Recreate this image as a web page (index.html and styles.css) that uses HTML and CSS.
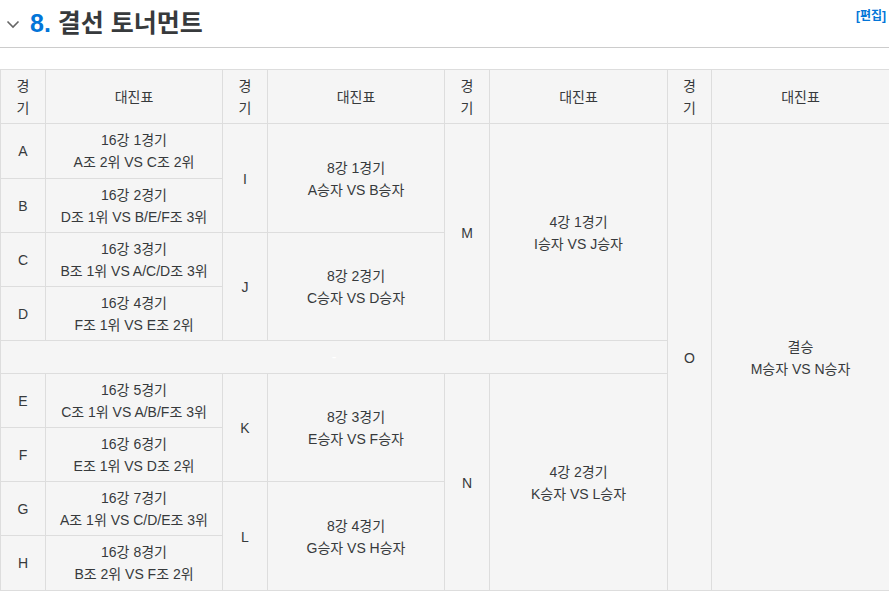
FILE: index.html
```html
<!DOCTYPE html>
<html lang="ko">
<head>
<meta charset="utf-8">
<link rel="stylesheet" href="styles.css">
</head>
<body>
<div class="heading">
  <svg class="chev" width="14" height="9" viewBox="0 0 14 9"><path d="M1.5 1.5 L7 7 L12.5 1.5" fill="none" stroke="#666" stroke-width="1.6"/></svg>
  <h2 class="title"><span class="num">8.</span> 결선 토너먼트</h2>
  <a class="edit">[편집]</a>
</div>
<table class="bracket">
  <colgroup>
    <col class="c-g"><col class="c-m"><col class="c-g"><col class="c-m"><col class="c-g"><col class="c-m3"><col class="c-g2"><col class="c-m3">
  </colgroup>
  <tr class="head">
    <td>경기</td><td>대진표</td><td>경기</td><td>대진표</td><td>경기</td><td>대진표</td><td>경기</td><td>대진표</td>
  </tr>
  <tr>
    <td class="tall">A</td><td class="tall">16강 1경기<br>A조 2위 VS C조 2위</td>
    <td rowspan="2">I</td><td rowspan="2">8강 1경기<br>A승자 VS B승자</td>
    <td rowspan="4">M</td><td rowspan="4">4강 1경기<br>I승자 VS J승자</td>
    <td rowspan="9">O</td><td rowspan="9">결승<br>M승자 VS N승자</td>
  </tr>
  <tr><td>B</td><td>16강 2경기<br>D조 1위 VS B/E/F조 3위</td></tr>
  <tr>
    <td>C</td><td>16강 3경기<br>B조 1위 VS A/C/D조 3위</td>
    <td rowspan="2">J</td><td rowspan="2">8강 2경기<br>C승자 VS D승자</td>
  </tr>
  <tr><td>D</td><td>16강 4경기<br>F조 1위 VS E조 2위</td></tr>
  <tr><td colspan="6" class="spacer"><span class="hidden">-</span></td></tr>
  <tr>
    <td>E</td><td>16강 5경기<br>C조 1위 VS A/B/F조 3위</td>
    <td rowspan="2">K</td><td rowspan="2">8강 3경기<br>E승자 VS F승자</td>
    <td rowspan="4">N</td><td rowspan="4">4강 2경기<br>K승자 VS L승자</td>
  </tr>
  <tr><td>F</td><td>16강 6경기<br>E조 1위 VS D조 2위</td></tr>
  <tr>
    <td>G</td><td>16강 7경기<br>A조 1위 VS C/D/E조 3위</td>
    <td rowspan="2">L</td><td rowspan="2">8강 4경기<br>G승자 VS H승자</td>
  </tr>
  <tr><td class="tall">H</td><td class="tall">16강 8경기<br>B조 2위 VS F조 2위</td></tr>
</table>
</body>
</html>
```
FILE: styles.css
```css
html, body {
  margin: 0;
  padding: 0;
  background: #fff;
  font-family: "Liberation Sans", "Noto Sans CJK KR", sans-serif;
  color: #373a3c;
}
.heading {
  display: flex;
  align-items: center;
  height: 48px;
  border-bottom: 1px solid #ccc;
  box-sizing: border-box;
  padding-left: 6px;
  position: relative;
}
.chev {
  margin-right: 10px;
  margin-top: 1px;
}
.title {
  margin: 0;
  font-family: "Liberation Sans", "Noto Sans CJK KR", sans-serif;
  font-size: 25px;
  font-weight: 700;
  color: #373a3c;
  line-height: 1;
}
.num {
  color: #0275d8;
}
.edit {
  position: absolute;
  right: 3px;
  top: 6px;
  font-size: 12px;
  font-weight: 700;
  color: #0275d8;
  font-family: "Liberation Sans", "Noto Sans CJK KR", sans-serif;
}
.bracket {
  margin-top: 21px;
  border-collapse: collapse;
  table-layout: fixed;
  width: 890px;
  font-size: 14px;
  line-height: 22px;
}
.c-g { width: 45px; }
.c-m { width: 177px; }
.c-m3 { width: 178px; }
.c-g2 { width: 44px; }
.bracket td {
  border: 1px solid #ddd;
  background: #f5f5f5;
  text-align: center;
  vertical-align: middle;
  padding: 5px 10px 4px;
  color: #373a3c;
}
.bracket td.tall {
  padding: 5px 10px 5px;
}
.bracket td.spacer {
  padding: 5px 10px;
}
.hidden {
  color: #fff;
}
```
